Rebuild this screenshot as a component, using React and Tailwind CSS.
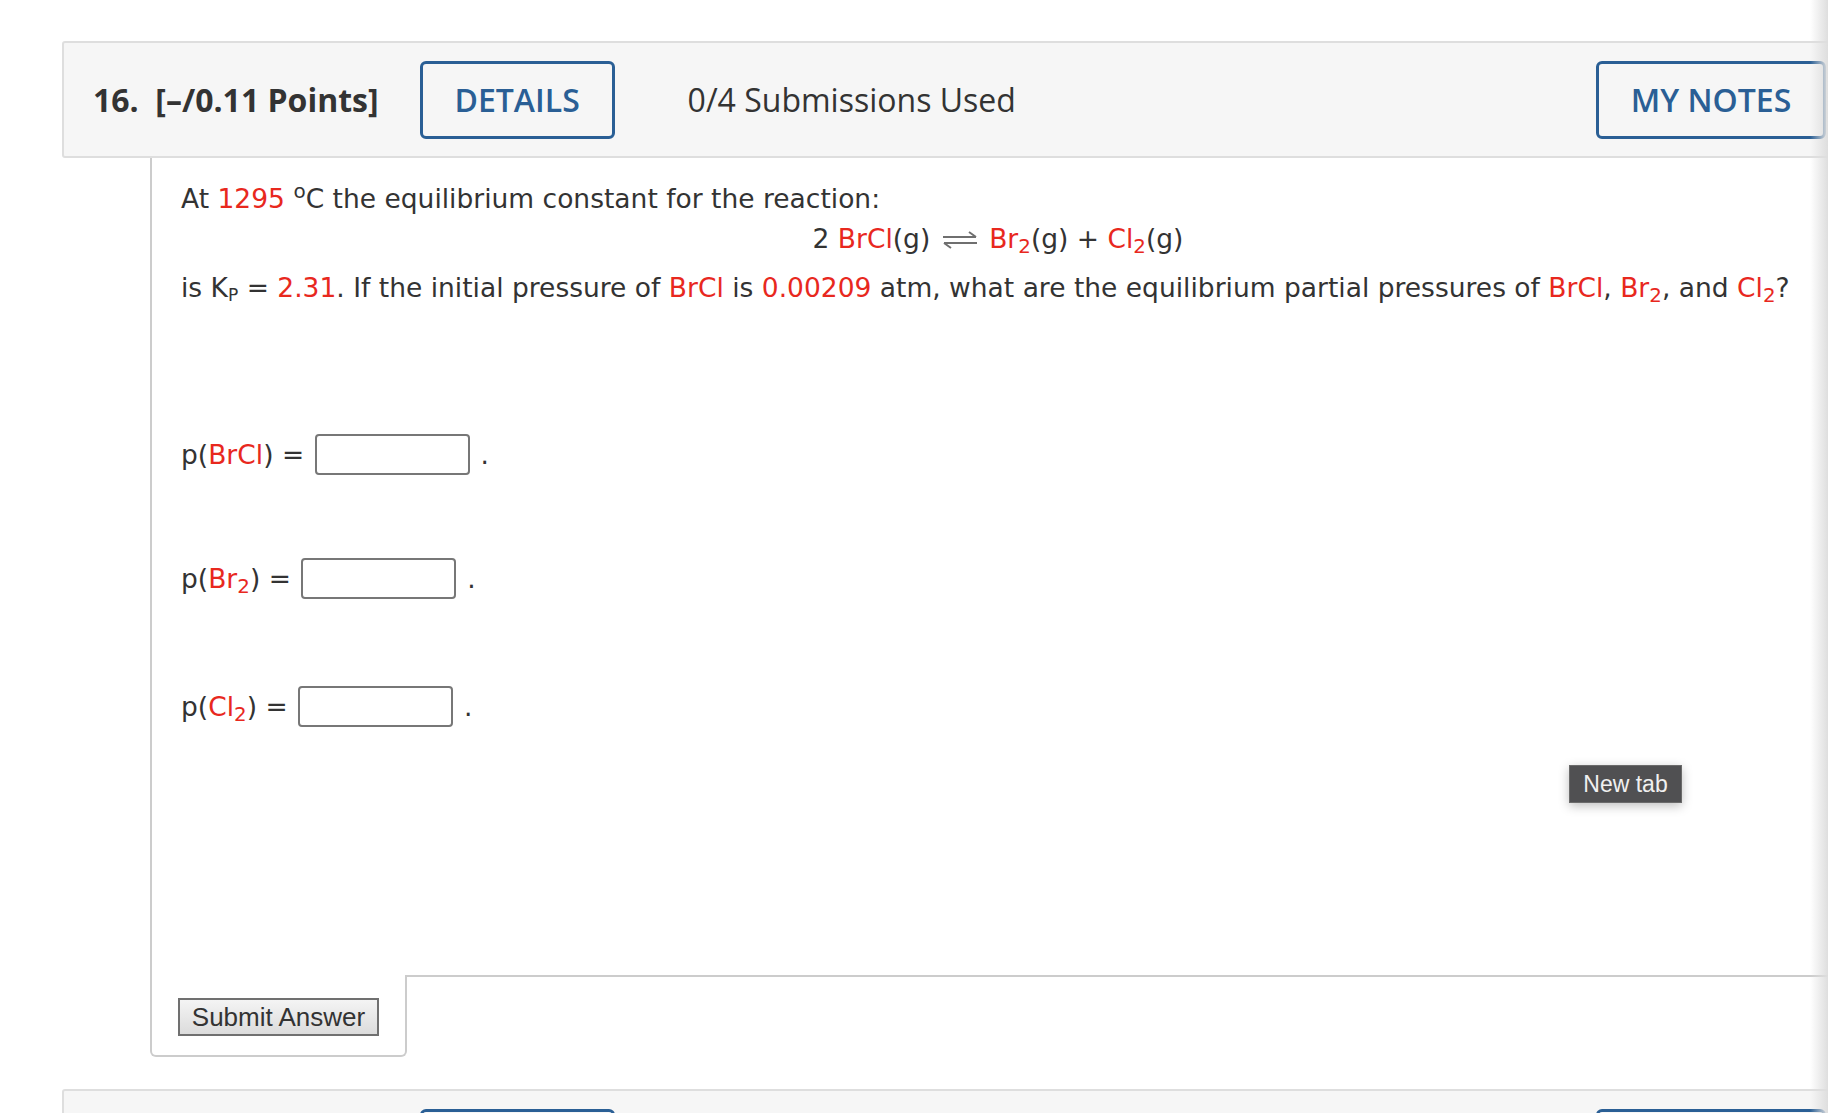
import React from 'react';

const Red = ({ children }) => <span className="text-[#e8281e]">{children}</span>;

const EqArrow = () => (
  <svg width="38" height="18" viewBox="0 0 38 18" className="mx-[2px] inline-block align-[-1px]" fill="none" stroke="#6f6f6f" strokeWidth="2">
    <path d="M2 6h33M35 6l-7-5" />
    <path d="M3 12h33M3 12l7 5" />
  </svg>
);

const QuestionHeader = ({ number, points, used }) => (
  <div className="flex h-[117px] w-[1800px] items-center rounded-[3px] border-2 border-[#dedede] bg-[#f6f6f6] font-['Open_Sans',sans-serif]">
    <span className="ml-[29px] whitespace-pre text-[32px] font-bold text-[#333]">
      {number}.  [–/{points} Points]
    </span>
    <button className="ml-[41px] flex h-[78px] w-[195px] items-center justify-center rounded-[6px] border-[3px] border-[#2a5f95] text-[32px] font-semibold text-[#2a5f95]">
      DETAILS
    </button>
    <span className="ml-[73px] text-[32px] text-[#333]">{used} Submissions Used</span>
    <div className="flex-1" />
    <button className="mr-[34px] flex h-[78px] w-[230px] items-center justify-center rounded-[6px] border-[3px] border-[#2a5f95] text-[32px] font-semibold text-[#2a5f95]">
      MY NOTES
    </button>
  </div>
);

const AnswerRow = ({ label, className = '' }) => (
  <div className={`flex h-[41px] items-center ${className}`}>
    <span className="whitespace-pre">{label} = </span>
    <div className="ml-[2px] h-[41px] w-[155px] rounded-[4px] border-2 border-[#777] bg-white" />
    <span className="ml-[11px]">.</span>
  </div>
);

export default function App() {
  return (
    <div className="relative h-[1113px] w-full overflow-hidden bg-white">
      <div className="pl-[62px] pt-[41px]">
        <QuestionHeader number="16" points="0.11" used="0/4" />

        <div className="ml-[88px] w-[1720px] font-['DejaVu_Sans',Verdana,sans-serif] text-[26.5px] text-[#333]">
          {/* question body */}
          <div className="border-l-2 border-[#cccccc] pb-[248px] pl-[29px] pr-[55px] pt-[24px]">
            <p className="leading-[33px]">
              At <Red>1295</Red> <sup className="text-[20px]">o</sup>C the equilibrium constant for the reaction:
            </p>
            <p className="mt-[7px] text-center leading-[33px]">
              2 <Red>BrCl</Red>(g) <EqArrow /> <Red>Br<sub>2</sub></Red>(g) + <Red>Cl<sub>2</sub></Red>(g)
            </p>
            <p className="mt-[16px] leading-[33px]">
              is K<sub className="text-[17px]">P</sub> = <Red>2.31</Red>. If the initial pressure of <Red>BrCl</Red> is <Red>0.00209</Red> atm, what are the equilibrium partial pressures of <Red>BrCl</Red>, <Red>Br<sub>2</sub></Red>, and <Red>Cl<sub>2</sub></Red>?
            </p>

            <div className="mt-[130px] flex flex-col">
              <AnswerRow label={<>p(<Red>BrCl</Red>)</>} />
              <AnswerRow className="mt-[83px]" label={<>p(<Red>Br<sub>2</sub></Red>)</>} />
              <AnswerRow className="mt-[87px]" label={<>p(<Red>Cl<sub>2</sub></Red>)</>} />
            </div>
          </div>

          {/* submit tab */}
          <div className="flex">
            <div className="flex h-[82px] w-[257px] items-start rounded-b-[6px] border-x-2 border-b-2 border-[#cccccc] pl-[26px] pt-[23px]">
              <button className="flex h-[38px] w-[201px] items-center justify-center border-2 border-[#707070] bg-gradient-to-b from-[#f4f4f4] to-[#dcdcdc] font-['Liberation_Sans',Arial,sans-serif] text-[26px] text-[#333]">
                Submit Answer
              </button>
            </div>
            <div className="flex-1 border-t-2 border-[#cccccc]" />
          </div>
        </div>

        <div className="mt-[32px]">
          <QuestionHeader number="17" points="0.11" used="0/4" />
        </div>
      </div>

      {/* browser tooltip */}
      <div className="absolute left-[1569px] top-[765px] flex h-[38px] w-[113px] items-center justify-center border border-[#6b6b6b] bg-[#505052] font-['Liberation_Sans',Arial,sans-serif] text-[23px] text-[#f0f0f0] shadow-[0_3px_10px_rgba(0,0,0,0.25)]">
        New tab
      </div>

      {/* right edge shade */}
      <div className="pointer-events-none absolute right-0 top-0 h-full w-[18px] bg-gradient-to-r from-white/0 to-[#dedede]" />
    </div>
  );
}
